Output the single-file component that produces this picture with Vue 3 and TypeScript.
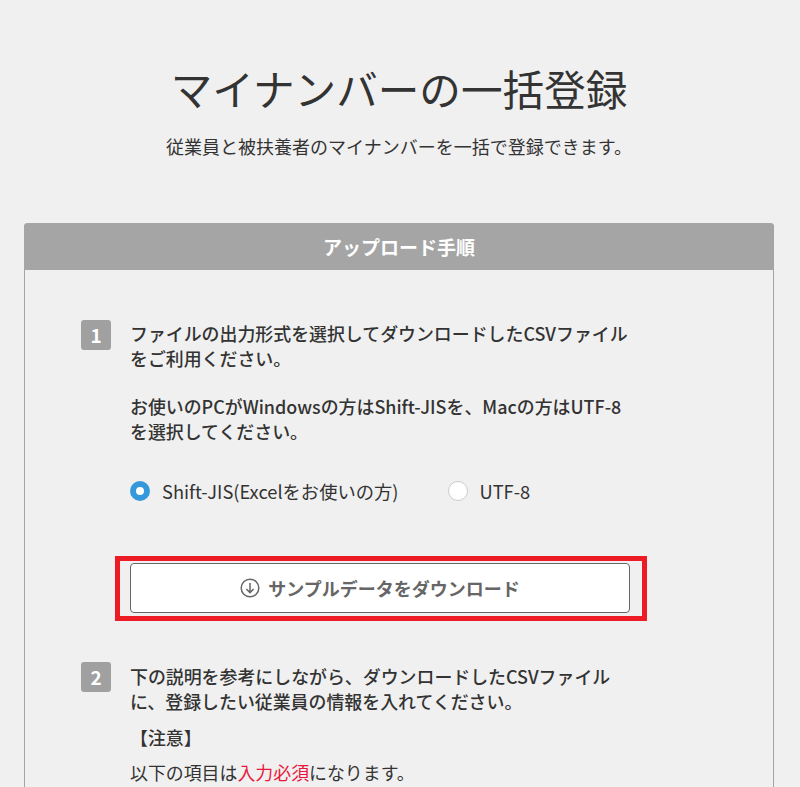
<template>
  <div class="page">
    <h1 class="title">マイナンバーの一括登録</h1>
    <p class="lead">従業員と被扶養者のマイナンバーを一括で登録できます。</p>

    <section class="panel">
      <h2 class="panel-head">アップロード手順</h2>
      <div class="panel-body">
        <div class="step">
          <span class="num">1</span>
          <div class="step-text">
            <p>ファイルの出力形式を選択してダウンロードしたCSVファイルをご利用ください。</p>
            <p class="gap">お使いのPCがWindowsの方はShift-JISを、Macの方はUTF-8を選択してください。</p>
          </div>
        </div>

        <div class="radios">
          <label v-for="opt in encodings" :key="opt.value" class="radio">
            <span class="dot" :class="{ on: encoding === opt.value }"></span>
            <input v-model="encoding" class="native" type="radio" :value="opt.value" />
            {{ opt.label }}
          </label>
        </div>

        <div class="download-wrap">
          <button class="download" type="button">
            <svg width="20" height="20" viewBox="0 0 20 20" fill="none" stroke="#666" stroke-width="1.5">
              <circle cx="10" cy="10" r="8.8" />
              <path d="M10 5v9.6M6.4 11l3.6 3.6 3.6-3.6" />
            </svg>
            サンプルデータをダウンロード
          </button>
          <div class="mark"></div>
        </div>

        <div class="step second">
          <span class="num">2</span>
          <div class="step-text">
            <p>下の説明を参考にしながら、ダウンロードしたCSVファイルに、登録したい従業員の情報を入れてください。</p>
            <p class="note">【注意】</p>
            <p class="plain">以下の項目は<span class="req">入力必須</span>になります。</p>
          </div>
        </div>
      </div>
    </section>
  </div>
</template>

<script setup lang="ts">
import { ref } from 'vue'

const encoding = ref('sjis')

const encodings = [
  { value: 'sjis', label: 'Shift-JIS(Excelをお使いの方)' },
  { value: 'utf8', label: 'UTF-8' }
]
</script>

<style>
html,
body {
  margin: 0;
  background: #f0f0f0;
  overflow: hidden;
}
</style>

<style scoped>
.page {
  height: 787px;
  overflow: hidden;
  box-sizing: border-box;
  padding: 0 26px 0 24px;
  font-family: "Noto Sans CJK JP", "Noto Sans", sans-serif;
  color: #333;
}

.title {
  margin: 0;
  padding-top: 58px;
  font-size: 41.6px;
  font-weight: 400;
  line-height: 60px;
  text-align: center;
}

.lead {
  margin: 0;
  padding-top: 15px;
  font-size: 18px;
  line-height: 26px;
  text-align: center;
}

.panel {
  margin-top: 64px;
  border: 1px solid #a5a5a5;
  border-top: none;
  border-radius: 4px 4px 0 0;
}

.panel-head {
  margin: 0 -1px;
  height: 47px;
  background: #a5a5a5;
  border-radius: 4px 4px 0 0;
  color: #fff;
  font-size: 19px;
  font-weight: 700;
  line-height: 47px;
  text-align: center;
}

.panel-body {
  padding: 50px 56px 80px;
}

.step {
  display: flex;
  gap: 19px;
  width: 549px;
}

.second {
  margin-top: 49px;
}

.num {
  flex: none;
  width: 30px;
  height: 30px;
  border-radius: 3px;
  background: #a0a0a0;
  color: #fff;
  font-size: 19px;
  font-weight: 700;
  line-height: 30px;
  text-align: center;
}

.step-text {
  flex: 1;
  padding-top: 1px;
  font-size: 17.92px;
  font-weight: 500;
  line-height: 25px;
}

.second .step-text {
  padding-top: 2px;
}

.step-text p {
  margin: 0;
}

.step-text .gap {
  margin-top: 23px;
}

.step-text .note {
  margin-top: 11px;
}

.step-text .plain {
  margin-top: 10px;
  font-weight: 400;
}

.req {
  color: #e8193c;
}

.radios {
  display: flex;
  gap: 50px;
  margin: 34px 0 0 49px;
}

.radio {
  display: flex;
  align-items: center;
  gap: 12px;
  font-size: 18.3px;
  line-height: 26px;
}

.radio + .radio {
  gap: 11px;
}

.native {
  display: none;
}

.dot {
  width: 20px;
  height: 20px;
  box-sizing: border-box;
  border: 1px solid #ccc;
  border-radius: 50%;
  background: #fff;
}

.dot.on {
  border: 6px solid #3498db;
}

.download-wrap {
  position: relative;
  width: 500px;
  margin: 59px 0 0 49px;
}

.download {
  display: flex;
  align-items: center;
  justify-content: center;
  gap: 8px;
  width: 100%;
  height: 50px;
  border: 1px solid #666;
  border-radius: 4px;
  background: #fff;
  color: #666;
  font-family: inherit;
  font-size: 18px;
  font-weight: 700;
}

.mark {
  position: absolute;
  inset: -7px -17px -8px -15px;
  border: 5px solid #ed1c24;
  pointer-events: none;
}
</style>
